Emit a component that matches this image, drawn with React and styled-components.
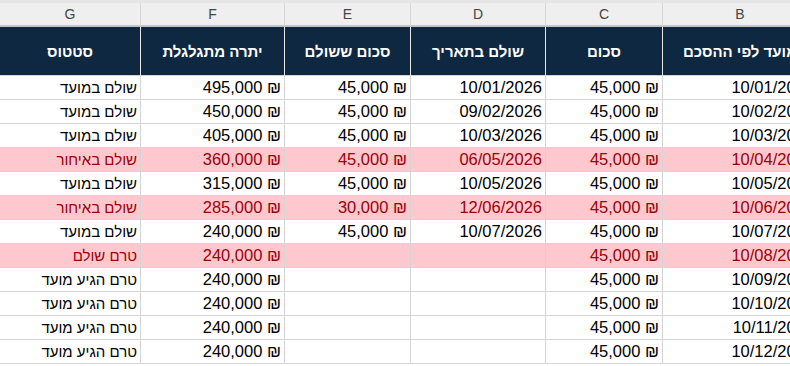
import React from "react";
import styled, { createGlobalStyle } from "styled-components";

const GlobalStyle = createGlobalStyle`
  body {
    margin: 0;
    background: #ffffff;
    overflow: hidden;
    font-family: "Liberation Sans", Arial, sans-serif;
  }
`;

const COLS = "140px 144px 126px 135px 117px 155px";

const Viewport = styled.div`
  width: 790px;
  height: 366px;
  overflow: hidden;
`;

const TopStrip = styled.div`
  height: 3px;
  background: #e6e6e6;
`;

const Grid = styled.div`
  display: grid;
  grid-template-columns: ${COLS};
  width: 817px;
`;

const Letter = styled.div`
  height: 22px;
  border-bottom: 2px solid #c4c4c4;
  border-left: ${p => (p.$first ? "none" : "1px solid #d6d6d6")};
  background: #efefef;
  color: #454545;
  font-size: 14px;
  display: flex;
  align-items: center;
  justify-content: center;
`;

const Head = styled.div`
  height: 48px;
  border-bottom: 1px solid #d4d4d4;
  border-left: ${p => (p.$first ? "none" : "1px solid #e8e8e8")};
  background: #0e2841;
  color: #ffffff;
  font-weight: bold;
  font-size: 15px;
  display: flex;
  align-items: center;
  justify-content: center;
  white-space: nowrap;
  direction: rtl;
`;

const Cell = styled.div`
  height: 23px;
  border-bottom: 1px solid #d4d4d4;
  border-left: ${p => (p.$first ? "none" : "1px solid #d4d4d4")};
  background: ${p => (p.$late ? "#ffc7ce" : "#ffffff")};
  color: ${p => (p.$late ? "#9c0006" : "#000000")};
  font-size: ${p => (p.$hebrew ? "15px" : "16.5px")};
  display: flex;
  align-items: center;
  justify-content: flex-end;
  padding-right: 3px;
  white-space: nowrap;
`;

const letters = ["G", "F", "E", "D", "C", "B"];
const heads = ["סטטוס", "יתרה מתגלגלת", "סכום ששולם", "שולם בתאריך", "סכום", "מועד לפי ההסכם"];

const rows = [
  ["שולם במועד", "495,000", "45,000", "10/01/2026", "45,000", "10/01/2026"],
  ["שולם במועד", "450,000", "45,000", "09/02/2026", "45,000", "10/02/2026"],
  ["שולם במועד", "405,000", "45,000", "10/03/2026", "45,000", "10/03/2026"],
  ["שולם באיחור", "360,000", "45,000", "06/05/2026", "45,000", "10/04/2026", true],
  ["שולם במועד", "315,000", "45,000", "10/05/2026", "45,000", "10/05/2026"],
  ["שולם באיחור", "285,000", "30,000", "12/06/2026", "45,000", "10/06/2026", true],
  ["שולם במועד", "240,000", "45,000", "10/07/2026", "45,000", "10/07/2026"],
  ["טרם שולם", "240,000", "", "", "45,000", "10/08/2026", true],
  ["טרם הגיע מועד", "240,000", "", "", "45,000", "10/09/2026"],
  ["טרם הגיע מועד", "240,000", "", "", "45,000", "10/10/2026"],
  ["טרם הגיע מועד", "240,000", "", "", "45,000", "10/11/2026"],
  ["טרם הגיע מועד", "240,000", "", "", "45,000", "10/12/2026"],
];

const money = v => (v ? `${v} ₪` : "");

export default function App() {
  return (
    <Viewport>
      <GlobalStyle />
      <TopStrip />
      <Grid>
        {letters.map((l, i) => (
          <Letter key={l} $first={i === 0}>{l}</Letter>
        ))}
        {heads.map((h, i) => (
          <Head key={h} $first={i === 0}>{h}</Head>
        ))}
        {rows.map((r, ri) => {
          const late = !!r[6];
          const vals = [r[0], money(r[1]), money(r[2]), r[3], money(r[4]), r[5]];
          return vals.map((v, ci) => (
            <Cell key={`${ri}-${ci}`} $first={ci === 0} $late={late} $hebrew={ci === 0}>
              {v}
            </Cell>
          ));
        })}
      </Grid>
    </Viewport>
  );
}
